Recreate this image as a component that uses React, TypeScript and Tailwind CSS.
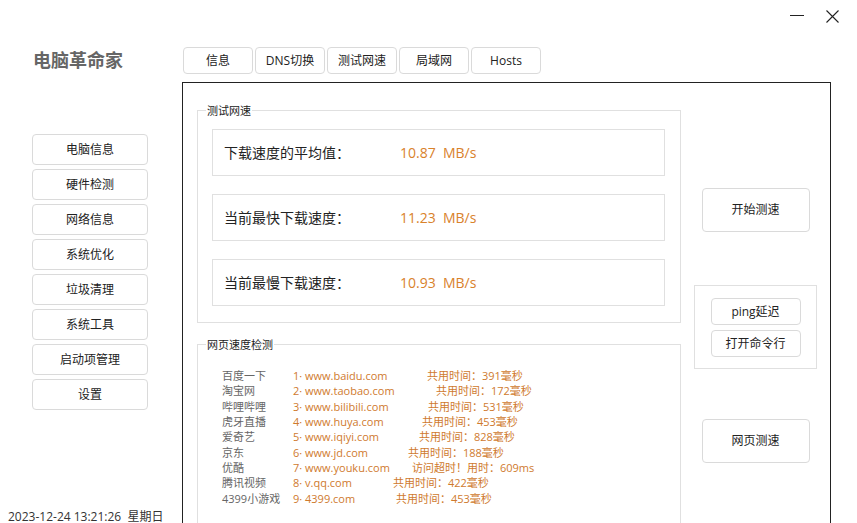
// SpeedTest window - "电脑革命家" network speed test page.

const font = 'font-["Open_Sans","Noto_Sans_CJK_SC",sans-serif]';

const navItems = ['电脑信息', '硬件检测', '网络信息', '系统优化', '垃圾清理', '系统工具', '启动项管理', '设置'];
const tabs = ['信息', 'DNS切换', '测试网速', '局域网', 'Hosts'];

const speedRows = [
  { label: '下载速度的平均值：', value: '10.87  MB/s' },
  { label: '当前最快下载速度：', value: '11.23  MB/s' },
  { label: '当前最慢下载速度：', value: '10.93  MB/s' },
];

// tx = page x where the time column starts for that row
const sites = [
  { name: '百度一下', url: '1· www.baidu.com', time: '共用时间：391毫秒', tx: 427 },
  { name: '淘宝网', url: '2· www.taobao.com', time: '共用时间：172毫秒', tx: 436 },
  { name: '哔哩哔哩', url: '3· www.bilibili.com', time: '共用时间：531毫秒', tx: 428 },
  { name: '虎牙直播', url: '4· www.huya.com', time: '共用时间：453毫秒', tx: 422 },
  { name: '爱奇艺', url: '5· www.iqiyi.com', time: '共用时间：828毫秒', tx: 419 },
  { name: '京东', url: '6· www.jd.com', time: '共用时间：188毫秒', tx: 408 },
  { name: '优酷', url: '7· www.youku.com', time: '访问超时！用时：609ms', tx: 412 },
  { name: '腾讯视频', url: '8· v.qq.com', time: '共用时间：422毫秒', tx: 393 },
  { name: '4399小游戏', url: '9· 4399.com', time: '共用时间：453毫秒', tx: 396 },
];

function GroupTitle({ children }: { children: string }) {
  return (
    <span className="absolute -top-[8px] left-[8px] bg-white px-[1px] text-[11px] leading-[16px] text-[#222]">
      {children}
    </span>
  );
}

function Button({ children, className }: { children: string; className?: string }) {
  return (
    <div
      className={`flex items-center justify-center rounded-[4px] border border-[#dadada] bg-white text-[12px] text-[#222] ${className ?? ''}`}
    >
      {children}
    </div>
  );
}

export default function App() {
  return (
    <div className={`relative flex h-[523px] w-[857px] overflow-hidden bg-white ${font}`}>
      {/* window controls */}
      <div className="absolute left-[790px] top-[9px] flex items-center gap-[21px]">
        <svg width="15" height="14" viewBox="0 0 15 14">
          <line x1="0" y1="6.5" x2="14" y2="6.5" stroke="#222" strokeWidth="1" />
        </svg>
        <svg width="13" height="13" viewBox="0 0 13 13">
          <path d="M0.5 0.5 L12.5 12.5 M12.5 0.5 L0.5 12.5" stroke="#222" strokeWidth="1.1" />
        </svg>
      </div>

      {/* left column */}
      <div className="flex w-[182px] shrink-0 flex-col">
        <div className="ml-[33px] mt-[47px] text-[18px] font-bold leading-[26px] text-[#666]">电脑革命家</div>
        <div className="ml-[32px] mt-[61px] flex w-[116px] flex-col gap-[4px]">
          {navItems.map((n) => (
            <Button key={n} className="h-[31px]">
              {n}
            </Button>
          ))}
        </div>
        <div className="ml-[8px] mt-[99px] whitespace-nowrap text-[12px] leading-[16px] text-[#333]">
          2023-12-24 13:21:26&nbsp; 星期日
        </div>
      </div>

      {/* right area */}
      <div className="flex flex-col">
        <div className="ml-[1px] mt-[47px] flex gap-[2px]">
          {tabs.map((t) => (
            <Button key={t} className="h-[27px] w-[70px] rounded-[3px]">
              {t}
            </Button>
          ))}
        </div>

        <div className="mt-[8px] flex h-[460px] w-[649px] border border-[#222]">
          {/* speed groups */}
          <div className="flex w-[498px] shrink-0 flex-col pl-[14px]">
            <div className="relative mt-[27px] h-[216px] w-[484px] border border-[#e0e0e0] pl-[14px] pt-[18px]">
              <GroupTitle>测试网速</GroupTitle>
              <div className="flex flex-col gap-[18px]">
                {speedRows.map((r) => (
                  <div key={r.label} className="flex h-[47px] w-[453px] items-center border border-[#e0e0e0] pl-[11px]">
                    <span className="w-[176px] text-[14px] text-[#222]">{r.label}</span>
                    <span className="whitespace-pre text-[14px] text-[#d9822b]">{r.value}</span>
                  </div>
                ))}
              </div>
            </div>

            <div className="relative mt-[21px] h-[200px] w-[484px] border border-[#e0e0e0] pl-[24px] pt-[23px]">
              <GroupTitle>网页速度检测</GroupTitle>
              <div className="flex flex-col">
                {sites.map((s) => (
                  <div key={s.url} className="flex h-[15.33px] items-center whitespace-nowrap text-[11px] leading-[15px]">
                    <span className="w-[71px] text-[#666]">{s.name}</span>
                    <span className="text-[#cf7a2e]" style={{ width: s.tx - 293 }}>
                      {s.url}
                    </span>
                    <span className="text-[#cf7a2e]">{s.time}</span>
                  </div>
                ))}
              </div>
            </div>
          </div>

          {/* action buttons */}
          <div className="flex flex-1 flex-col items-center">
            <Button className="mt-[105px] h-[44px] w-[108px]">开始测速</Button>
            <div className="mt-[53px] flex h-[84px] w-[123px] flex-col items-center gap-[5px] border border-[#e0e0e0] pt-[12px]">
              <Button className="h-[27px] w-[90px]">ping延迟</Button>
              <Button className="h-[27px] w-[90px]">打开命令行</Button>
            </div>
            <Button className="mt-[50px] h-[44px] w-[108px]">网页测速</Button>
          </div>
        </div>
      </div>
    </div>
  );
}
